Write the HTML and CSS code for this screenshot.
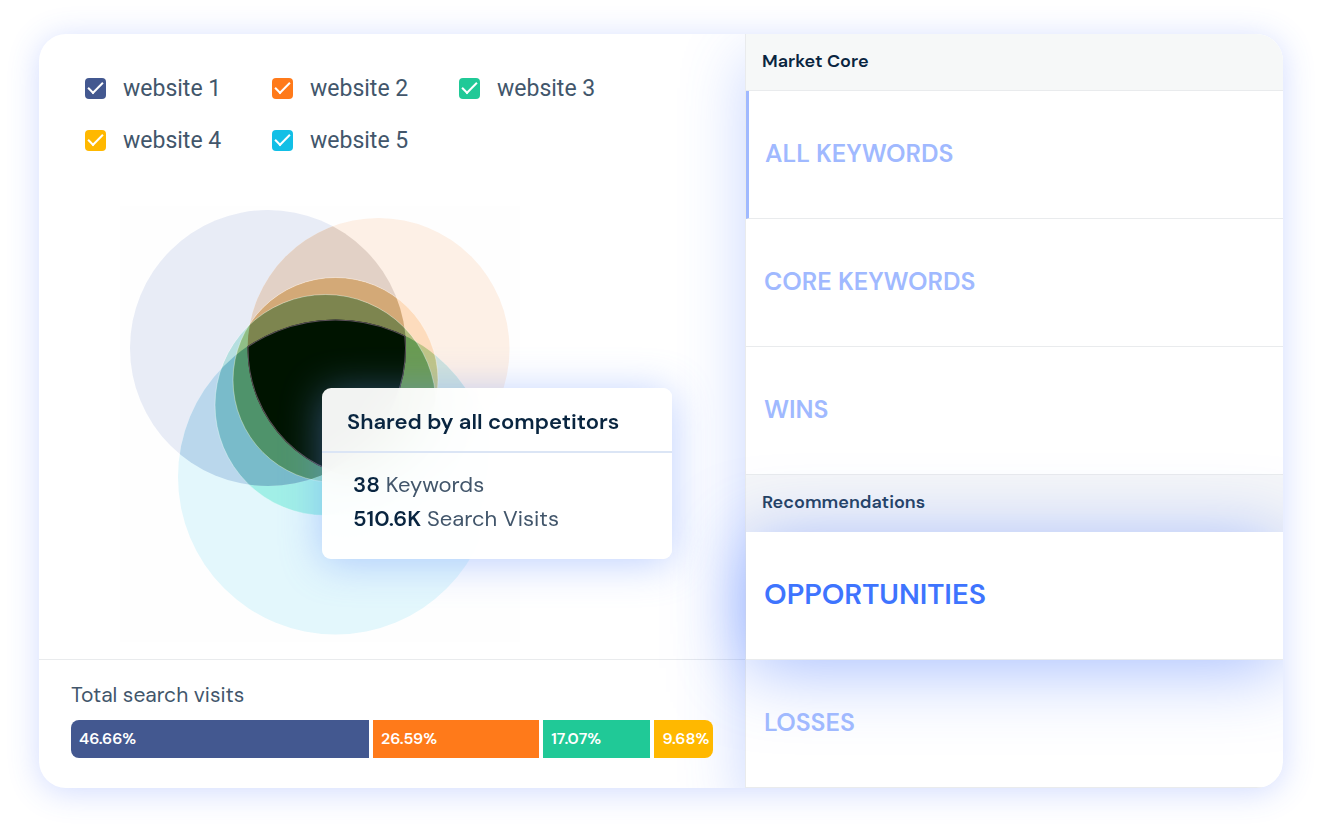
FILE: index.html
```html
<!DOCTYPE html>
<html lang="en">
<head>
  <meta charset="UTF-8" />
  <meta name="viewport" content="width=device-width, initial-scale=1.0"/>
  <title>Keyword Gap</title>
  <link rel="stylesheet" href="styles.css">
</head>
<body>
  <main class="card">
    <section class="overview">
      <div class="overlap">
        <div class="sites">
          <label class="site"><input type="checkbox" class="check navy" checked>website 1</label>
          <label class="site"><input type="checkbox" class="check orange" checked>website 2</label>
          <label class="site"><input type="checkbox" class="check green" checked>website 3</label>
          <label class="site"><input type="checkbox" class="check yellow" checked>website 4</label>
          <label class="site"><input type="checkbox" class="check cyan" checked>website 5</label>
        </div>

        <div class="chart">
          <svg class="venn" viewBox="120 206 400 436" role="img" aria-label="Keyword overlap">
            <defs>
              <circle id="a" cx="268" cy="348" r="138"/>
              <circle id="b" cx="378.5" cy="349" r="131"/>
              <circle id="c" cx="325.5" cy="405" r="110.5"/>
              <circle id="d" cx="335.5" cy="380" r="102.5"/>
              <circle id="e" cx="335.5" cy="477" r="157.5"/>
              <clipPath id="in-a"><use href="#a"/></clipPath>
              <clipPath id="in-b"><use href="#b"/></clipPath>
              <clipPath id="in-c"><use href="#c"/></clipPath>
              <clipPath id="in-d"><use href="#d"/></clipPath>
              <clipPath id="in-e"><use href="#e"/></clipPath>
            </defs>

            <!-- single sites -->
            <use href="#a" fill="#e8ecf6"/>
            <use href="#b" fill="#fdf0e6"/>
            <use href="#e" fill="#e3f7fc"/>

            <!-- two sites -->
            <g clip-path="url(#in-a)">
              <use href="#b" fill="#e2d1c6"/>
              <use href="#e" fill="#bad7ec"/>
            </g>
            <g clip-path="url(#in-b)">
              <use href="#e" fill="#cfe2dc"/>
              <use href="#d" fill="#fddcbd"/>
            </g>
            <g clip-path="url(#in-c)">
              <use href="#e" fill="#a1efe7"/>
              <g clip-path="url(#in-a)">
                <use href="#c" fill="#b5dfe0"/>
                <use href="#e" fill="#79bbca"/>
              </g>
            </g>

            <!-- three and more -->
            <g clip-path="url(#in-d)">
              <g clip-path="url(#in-b)">
                <use href="#e" fill="#c0c587"/>
                <g clip-path="url(#in-a)"><use href="#d" fill="#d3a977"/></g>
              </g>
              <g clip-path="url(#in-c)">
                <use href="#e" fill="#8fd8c0"/>
                <g clip-path="url(#in-b)">
                  <use href="#c" fill="#b5be80"/>
                  <use href="#e" fill="#6a9b53"/>
                </g>
                <g clip-path="url(#in-a)">
                  <use href="#c" fill="#90bf87"/>
                  <use href="#e" fill="#4f936b"/>
                  <g clip-path="url(#in-b)">
                    <use href="#c" fill="#7d854f"/>
                    <use href="#e" fill="#001400"/>
                  </g>
                </g>
              </g>
            </g>

            <!-- outlines -->
            <g fill="none" stroke="#fff" stroke-opacity=".35">
              <use href="#c"/>
              <use href="#d"/>
            </g>
            <g fill="none" stroke="#5a5058" stroke-width="2" clip-path="url(#in-a)">
              <g clip-path="url(#in-b)">
                <g clip-path="url(#in-e)">
                  <use href="#e"/>
                  <use href="#a"/>
                  <use href="#b"/>
                </g>
              </g>
            </g>
          </svg>

          <div class="tooltip">
            <h2 class="tooltip-title">Shared by all competitors</h2>
            <div class="tooltip-body">
              <p><strong>38</strong> Keywords</p>
              <p><strong>510.6K</strong> Search Visits</p>
            </div>
          </div>
        </div>
      </div>

      <div class="visits">
        <h3 class="visits-title">Total search visits</h3>
        <div class="bar">
          <div class="segment navy" style="flex-grow: 47.3">46.66%</div>
          <div class="segment orange" style="flex-grow: 26.4">26.59%</div>
          <div class="segment green" style="flex-grow: 17">17.07%</div>
          <div class="segment yellow" style="flex-grow: 9.3">9.68%</div>
        </div>
      </div>
    </section>

    <nav class="menu">
      <h3 class="menu-title">Market Core</h3>
      <a href="#" class="menu-item current">ALL KEYWORDS</a>
      <a href="#" class="menu-item">CORE KEYWORDS</a>
      <a href="#" class="menu-item">WINS</a>
      <h3 class="menu-title shaded">Recommendations</h3>
      <a href="#" class="menu-item active">OPPORTUNITIES</a>
      <a href="#" class="menu-item">LOSSES</a>
    </nav>
  </main>
</body>
</html>
```
FILE: styles.css
```css
:root {
  --navy: #435890;
  --orange: #ff7a1a;
  --green: #20c997;
  --yellow: #ffb800;
  --cyan: #12bfe6;
  --ink: #092540;
  --text: #42566b;
  --blue: #3e74fe;
  --blue-light: #a0b9ff;
  --line: #e9ebed;
}

* {
  margin: 0;
  padding: 0;
  box-sizing: border-box;
}

body {
  font-family: "DM Sans", Inter, sans-serif;
  background: #fff;
  color: var(--text);
  padding: 34px 37px 42px 39px;
}

.card {
  display: grid;
  grid-template-columns: 706fr 538fr;
  background: #fff;
  border-radius: 27px;
  box-shadow: 0 4px 32px rgba(62, 106, 255, 0.24);
  overflow: hidden;
}

.overview {
  display: flex;
  flex-direction: column;
}

.overlap {
  flex: 1;
  padding: 44px 46px 16px;
}

.sites {
  display: grid;
  grid-template-columns: repeat(3, 187px);
  row-gap: 31px;
}

.site {
  display: flex;
  align-items: center;
  gap: 17px;
  font-family: Roboto, sans-serif;
  font-size: 23px;
  line-height: 21px;
}

.check {
  appearance: none;
  position: relative;
  width: 21px;
  height: 21px;
  border-radius: 4px;
}

.check:checked::after {
  content: "";
  position: absolute;
  left: 3px;
  top: 4px;
  width: 15px;
  height: 8px;
  box-sizing: border-box;
  border: solid #fff;
  border-width: 0 0 2px 2px;
  transform: rotate(-45deg);
}

.navy { background: var(--navy); }
.orange { background: var(--orange); }
.green { background: var(--green); }
.yellow { background: var(--yellow); }
.cyan { background: var(--cyan); }

.chart {
  position: relative;
  z-index: 2;
  width: 400px;
  margin: 55px 0 0 35px;
}

.venn {
  display: block;
  width: 100%;
  background: #fefefe;
}

.tooltip {
  position: absolute;
  left: 202px;
  top: 182px;
  width: 350px;
  border-radius: 9px;
  background: rgba(255, 255, 255, 0.95);
  backdrop-filter: blur(24px);
  box-shadow: 0 4px 40px rgba(110, 150, 255, 0.46);
}

.tooltip-title {
  padding: 20px 25px 15px;
  border-bottom: 2px solid #dbe5f5;
  color: var(--ink);
  font-size: 22px;
  font-weight: 600;
  line-height: 28px;
}

.tooltip-body {
  padding: 15px 31px 23px;
  font-size: 22px;
  line-height: 34px;
}

.tooltip-body strong {
  color: var(--ink);
  font-weight: 600;
}

.visits {
  padding: 21px 32px 30px;
  border-top: 1px solid var(--line);
}

.visits-title {
  margin-bottom: 11px;
  font-size: 21px;
  font-weight: 400;
  line-height: 28px;
}

.bar {
  position: relative;
  z-index: 2;
  display: flex;
  gap: 4px;
  border-radius: 8px;
  overflow: hidden;
}

.segment {
  flex: 1 1 0;
  min-width: 0;
  padding-bottom: 1px;
  text-indent: 8px;
  color: #fff;
  font-size: 16px;
  font-weight: 600;
  line-height: 37px;
}

.menu {
  position: relative;
  border-left: 1px solid var(--line);
  background: #fff;
  box-shadow: 0 24px 60px rgba(72, 120, 255, 0.3);
}

.menu-title {
  padding: 0 16px 1px;
  border-bottom: 1px solid var(--line);
  background: #f6f8f8;
  color: var(--ink);
  font-size: 18px;
  font-weight: 600;
  line-height: 55px;
}

.menu-title.shaded {
  border-bottom-color: #f5f6f8;
  background: #f5f6f8;
  color: #24405e;
}

.menu-item {
  display: block;
  padding: 0 18px 2px;
  border-bottom: 1px solid var(--line);
  color: var(--blue-light);
  font-size: 25px;
  font-weight: 600;
  line-height: 125px;
  text-decoration: none;
}

.menu-item.current {
  padding-left: 16px;
  border-left: 3px solid var(--blue-light);
}

.menu-item.active {
  position: relative;
  background: #fff;
  color: var(--blue);
  font-size: 29px;
  box-shadow: 0 8px 72px rgba(72, 120, 255, 0.5);
}

/* last label sits above the glow of the active row */
.menu-item:last-child {
  position: relative;
}
```
